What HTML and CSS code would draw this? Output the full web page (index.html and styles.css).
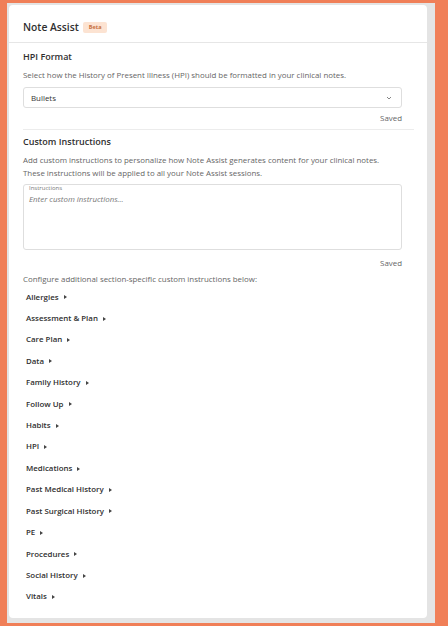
FILE: index.html
```html
<!DOCTYPE html>
<html>
<head>
<meta charset="utf-8">
<link rel="stylesheet" href="styles.css">
</head>
<body>
<div class="panel">
  <div class="card">
    <div class="header">
      <span class="title">Note Assist</span>
      <span class="badge">Beta</span>
    </div>
    <div class="body">
      <div class="section">
        <h2 class="h">HPI Format</h2>
        <p class="desc">Select how the History of Present Illness (HPI) should be formatted in your clinical notes.</p>
        <div class="select">
          <span>Bullets</span>
          <svg class="chev" width="6" height="4" viewBox="0 0 6 4"><path d="M1 1 L3 3 L5 1" fill="none" stroke="#777" stroke-width="0.9"/></svg>
        </div>
        <div class="saved">Saved</div>
      </div>
      <hr class="divider">
      <div class="section">
        <h2 class="h">Custom Instructions</h2>
        <p class="desc two">Add custom instructions to personalize how Note Assist generates content for your clinical notes.<br>These instructions will be applied to all your Note Assist sessions.</p>
        <div class="textarea">
          <div class="tlabel">Instructions</div>
          <div class="placeholder">Enter custom instructions...</div>
        </div>
        <div class="saved saved2">Saved</div>
        <p class="desc cfg">Configure additional section-specific custom instructions below:</p>
        <ul class="list">
          <li>Allergies <i class="tri"></i></li>
          <li>Assessment &amp; Plan <i class="tri"></i></li>
          <li>Care Plan <i class="tri"></i></li>
          <li>Data <i class="tri"></i></li>
          <li>Family History <i class="tri"></i></li>
          <li>Follow Up <i class="tri"></i></li>
          <li>Habits <i class="tri"></i></li>
          <li>HPI <i class="tri"></i></li>
          <li>Medications <i class="tri"></i></li>
          <li>Past Medical History <i class="tri"></i></li>
          <li>Past Surgical History <i class="tri"></i></li>
          <li>PE <i class="tri"></i></li>
          <li>Procedures <i class="tri"></i></li>
          <li>Social History <i class="tri"></i></li>
          <li>Vitals <i class="tri"></i></li>
        </ul>
      </div>
    </div>
  </div>
</div>
</body>
</html>
```
FILE: styles.css
```css
* { box-sizing: border-box; }
html, body { margin: 0; height: 100%; }
body {
  background: #f07f58;
  padding: 3px 13px 3px 7px;
  font-family: "Open Sans", "Liberation Sans", sans-serif;
  color: #333;
}
.panel {
  background: #e4e4e4;
  height: 620px;
  padding: 2px 8px 5px 2px;
}
.card {
  background: #fff;
  height: 613px;
  border-radius: 4px;
}
.header {
  display: flex;
  align-items: center;
  gap: 4px;
  padding: 15px 14px 8px;
  height: 38px;
  border-bottom: 1px solid #e6e6e6;
}
.title {
  font-size: 10.3px;
  font-weight: 600;
  line-height: 14px;
  color: #2f2f2f;
}
.badge {
  background: #fce3d2;
  color: #c7703f;
  font-size: 5.5px;
  font-weight: 700;
  line-height: 11px;
  padding: 0 6px;
  border-radius: 2px;
}
.body {
  padding: 7px 13px 0 14px;
}
.section { padding-right: 12px; }
.h {
  margin: 0;
  font-size: 9px;
  font-weight: 600;
  line-height: 14px;
  color: #2f2f2f;
}
.desc {
  margin: 5px 0 0;
  font-size: 7.9px;
  line-height: 12px;
  color: #666;
}
.desc.two { margin-top: 4.5px; line-height: 13px; }
.select {
  margin-top: 6px;
  height: 21px;
  border: 1px solid #dedede;
  border-radius: 3px;
  display: flex;
  align-items: center;
  justify-content: space-between;
  padding: 0 9px 0 7px;
  font-size: 7.9px;
  color: #333;
}
.chev { margin-top: 1px; }
.saved {
  margin-top: 5px;
  text-align: right;
  font-size: 7.9px;
  line-height: 10px;
  color: #666;
}
.divider {
  margin: 6px 0 0;
  border: 0;
  border-top: 1px solid #ececec;
}
.section + .divider + .section .h { margin-top: 5px; }
.textarea {
  margin-top: 4.5px;
  height: 66px;
  border: 1px solid #dedede;
  border-radius: 3px;
  padding: 0 5px;
}
.tlabel {
  font-size: 6px;
  line-height: 7px;
  color: #777;
}
.placeholder {
  margin-top: 1px;
  font-size: 7.9px;
  font-style: italic;
  line-height: 12px;
  color: #777;
}
.saved2 { margin-top: 8px; }
.desc.cfg { margin-top: 5px; }
.list {
  list-style: none;
  margin: 1.5px 0 0;
  padding: 0 0 0 3px;
}
.list li {
  height: 21.43px;
  line-height: 21.43px;
  font-size: 7.9px;
  font-weight: 600;
  color: #2f2f2f;
  display: flex;
  align-items: center;
  gap: 5px;
}
.tri {
  display: inline-block;
  width: 0;
  height: 0;
  border-top: 2.2px solid transparent;
  border-bottom: 2.2px solid transparent;
  border-left: 3px solid #444;
}
```
